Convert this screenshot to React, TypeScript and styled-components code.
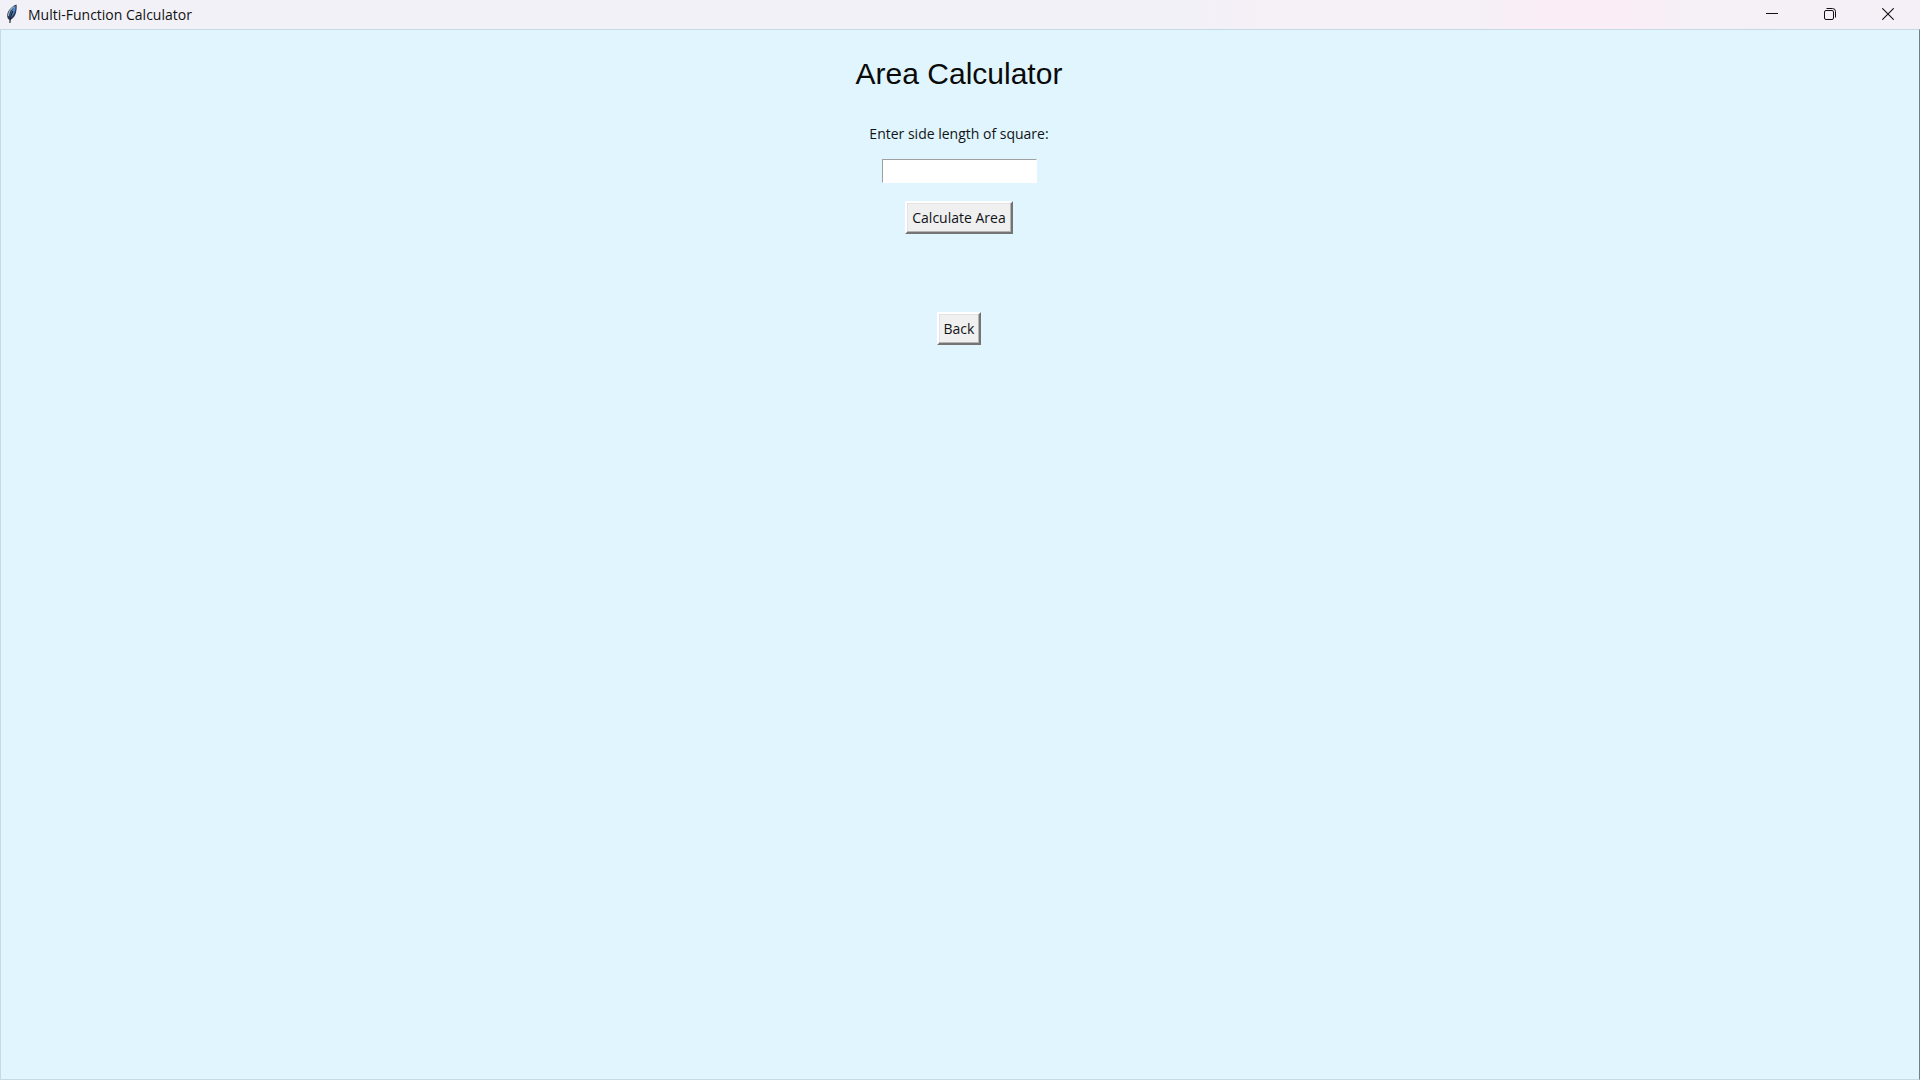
import React, { useState } from "react";
import styled, { createGlobalStyle } from "styled-components";

const uiFont = `"Segoe UI", "Open Sans", "Noto Sans", sans-serif`;

const GlobalStyle = createGlobalStyle`
  *, *::before, *::after { box-sizing: border-box; }
  body { margin: 0; font-family: ${uiFont}; color: #101418; }
`;

const Window = styled.div`
  display: flex;
  flex-direction: column;
  min-height: 100vh;
`;

const TitleBar = styled.header`
  display: flex;
  align-items: flex-start;
  height: 29px;
  padding: 0 3px 0 6px;
  background: linear-gradient(90deg, #f3f1f8 0%, #f3f1f8 62%, #f6f0f7 66%, #f6f0f7 77%, #faedf6 80%, #faedf6 85%, #f6f0f7 88%, #f5f0f7 100%);
`;

const AppTitle = styled.span`
  flex: 1;
  padding-left: 10px;
  font-size: 14px;
  line-height: 29px;
  color: #111;
`;

const CaptionButton = styled.button`
  display: flex;
  align-items: center;
  justify-content: center;
  width: 58px;
  height: 28px;
  padding: 0;
  border: 0;
  background: transparent;
  color: #111;
`;

const Content = styled.main`
  flex: 1;
  display: flex;
  flex-direction: column;
  align-items: center;
  padding: 20px 3px 20px 1px;
  background: #e0f5fe;
  border: 1px solid #c6dae3;
  border-right-color: #708088;
`;

const Heading = styled.h1`
  margin: 0;
  font: 400 30px/48px "Liberation Sans", Arial, sans-serif;
  color: #0a0a0a;
`;

const Form = styled.form`
  display: flex;
  flex-direction: column;
  align-items: center;
`;

const FieldLabel = styled.label`
  margin-top: 24px;
  font-size: 14px;
  line-height: 24px;
`;

const Entry = styled.input`
  width: 155px;
  height: 24px;
  margin-top: 13px;
  padding: 0 2px;
  border: 1px solid #fff;
  border-top-color: #a0a0a0;
  border-left-color: #a0a0a0;
  border-radius: 0;
  outline: 0;
  background: #fff;
  font: 14px ${uiFont};
`;

const PushButton = styled.button`
  height: 33px;
  padding: 0 5px;
  border: 2px solid;
  border-color: #fff #747474 #747474 #fff;
  border-radius: 0;
  background: #f0f0f0;
  box-shadow: inset -1px -1px #b4b4b4, inset 1px 1px #e3e3e3;
  color: #101418;
  font: 14px/24px ${uiFont};
`;

const SubmitButton = styled(PushButton)`
  margin-top: 18px;
`;

const Result = styled.output`
  height: 78px;
  padding-top: 27px;
  font-size: 14px;
  line-height: 24px;
`;

const FeatherIcon = styled.svg`
  flex: none;
  margin-top: 4px;
`;

const Feather = () => (
  <FeatherIcon width="12" height="21" viewBox="0 0 12 21" aria-hidden="true">
    <path d="M10.5.5C7 1.500 2.500 5.500 1.300 10c-.5 2 .1 4.300 1.400 5.500l1 .6c3-.8 5.600-4.100 6.300-7.600.600-2.600 1-5.500.5-8z" fill="#2b3c56" />
    <path d="M9.800 2C6.800 4.500 4.800 8 3.900 14 7 12 9.500 7.500 9.800 2z" fill="#4c8fdc" />
    <path d="M8.500 2.500C5 4.500 2.800 8 2.300 12" stroke="#9fb1c4" strokeWidth="1.200" fill="none" />
    <path d="M7 7C5 10.500 3.900 14 3.900 19" stroke="#1b2536" strokeWidth="1.100" fill="none" />
  </FeatherIcon>
);

const glyph = { width: 12, height: 12, viewBox: "0 0 12 12", fill: "none", stroke: "currentColor" };

const MinimizeIcon = () => (
  <svg {...glyph}><path d="M0 5.500h12" /></svg>
);

const RestoreIcon = () => (
  <svg {...glyph}>
    <rect x=".5" y="2.500" width="9" height="9" rx="1.500" />
    <path d="M2.500 .5H8.500a3 3 0 0 1 3 3V9.500" />
  </svg>
);

const CloseIcon = () => (
  <svg {...glyph}><path d="M.3.3l11.400 11.400M11.700.3.3 11.700" strokeWidth="1.100" /></svg>
);

export default function App() {
  const [side, setSide] = useState("");
  const [result, setResult] = useState("");

  const calculate = (event: React.FormEvent) => {
    event.preventDefault();
    const length = Number(side);
    setResult(side && !Number.isNaN(length) ? `Area: ${length * length}` : "");
  };

  const reset = () => {
    setSide("");
    setResult("");
  };

  return (
    <Window>
      <GlobalStyle />
      <TitleBar>
        <Feather />
        <AppTitle>Multi-Function Calculator</AppTitle>
        <CaptionButton type="button" aria-label="Minimize"><MinimizeIcon /></CaptionButton>
        <CaptionButton type="button" aria-label="Restore"><RestoreIcon /></CaptionButton>
        <CaptionButton type="button" aria-label="Close"><CloseIcon /></CaptionButton>
      </TitleBar>
      <Content>
        <Heading>Area Calculator</Heading>
        <Form onSubmit={calculate}>
          <FieldLabel htmlFor="side">Enter side length of square:</FieldLabel>
          <Entry id="side" type="text" value={side} onChange={(e) => setSide(e.target.value)} />
          <SubmitButton type="submit">Calculate Area</SubmitButton>
          <Result htmlFor="side">{result}</Result>
        </Form>
        <PushButton type="button" onClick={reset}>Back</PushButton>
      </Content>
    </Window>
  );
}
